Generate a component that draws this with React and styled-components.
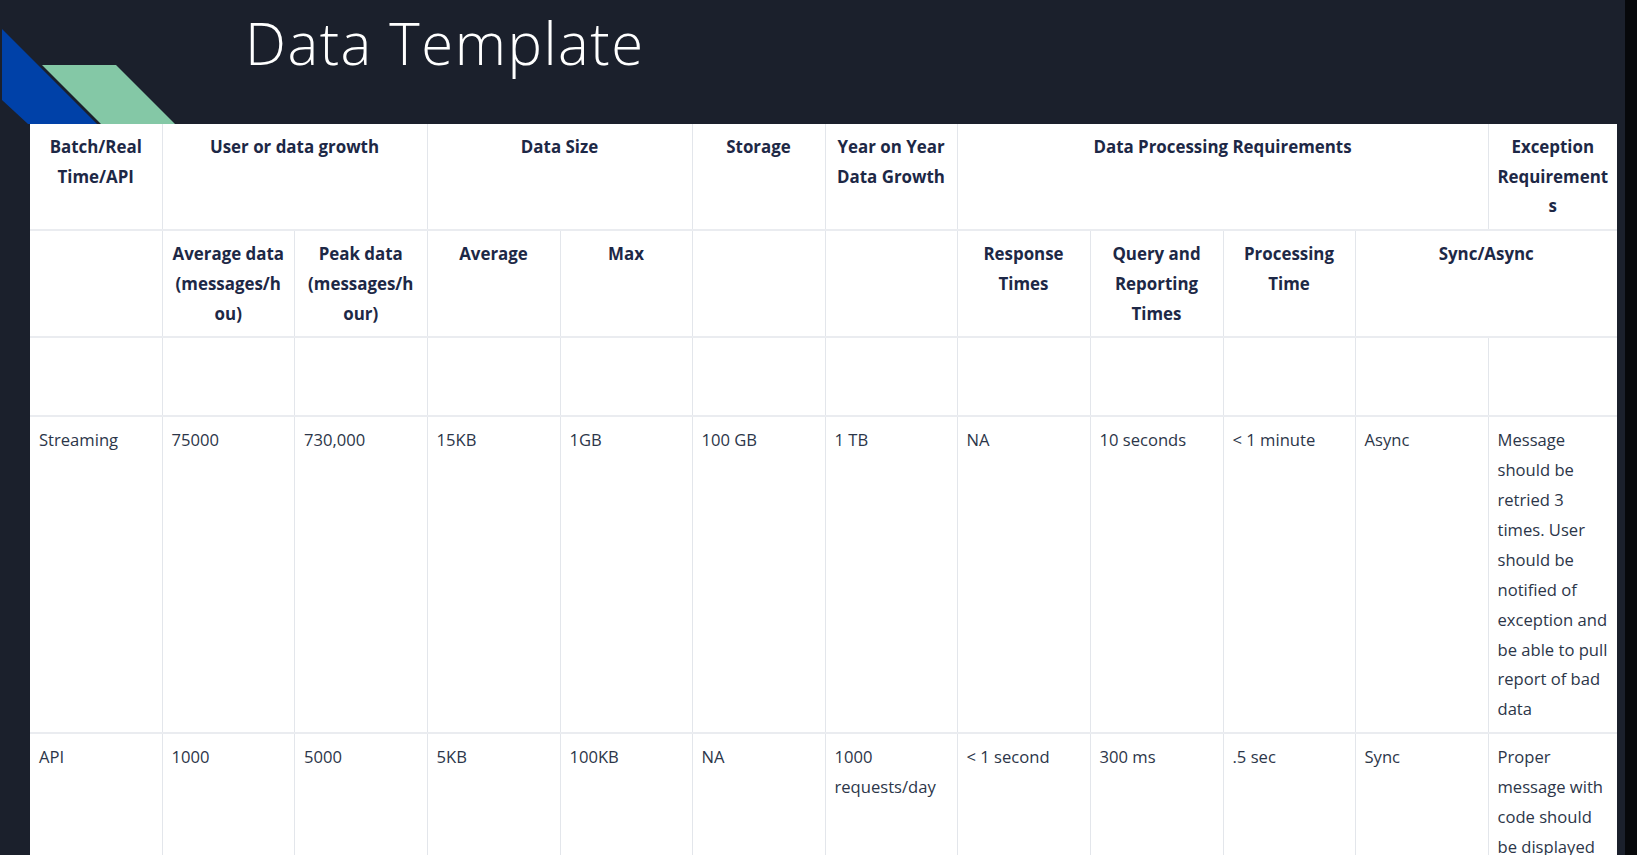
import React from "react";
import styled, { createGlobalStyle } from "styled-components";

const Global = createGlobalStyle`
  html, body {
    margin: 0;
    padding: 0;
    background: #07080b;
    overflow: hidden;
  }
  body {
    font-family: "Open Sans", "Noto Sans", "Liberation Sans", sans-serif;
  }
`;

const Slide = styled.div`
  width: 1625px;
  height: 855px;
  background: #1b202c;
  display: flex;
  flex-direction: column;
  overflow: hidden;
`;

const Header = styled.header`
  height: 124px;
  display: flex;
  align-items: flex-start;
  flex-shrink: 0;
`;

const Decor = styled.svg`
  width: 180px;
  height: 124px;
  flex-shrink: 0;
  display: block;
`;

const Title = styled.h1`
  margin: 0 0 0 65px;
  padding-top: 14px;
  font-family: "Open Sans", "Noto Sans", sans-serif;
  font-weight: 300;
  font-size: 58px;
  line-height: 58px;
  color: #ffffff;
  letter-spacing: 1.5px;
`;

const TableWrap = styled.div`
  padding-left: 30px;
  flex: 1;
`;

const Table = styled.table`
  width: 1587px;
  table-layout: fixed;
  border-collapse: collapse;
  background: #ffffff;
`;

const Col = styled.col`
  width: ${(p) => p.$w}px;
`;

const Row = styled.tr`
  height: ${(p) => (p.$h ? `${p.$h}px` : "auto")};
`;

const Th = styled.th`
  border-left: 1px solid #e3e6eb;
  border-top: 2px solid #eaecf0;
  padding: 8px 8px;
  vertical-align: top;
  text-align: center;
  font-weight: 700;
  font-size: 16.9px;
  line-height: 29.7px;
  color: #1d2846;
  overflow-wrap: anywhere;
  &:first-child {
    border-left: none;
  }
`;

const Td = styled.td`
  border-left: 1px solid #e3e6eb;
  border-top: 2px solid #eaecf0;
  padding: 8px 7px 8px 9px;
  vertical-align: top;
  text-align: left;
  font-weight: 400;
  font-size: 16.6px;
  line-height: 29.9px;
  color: #2c3649;
  overflow-wrap: anywhere;
  &:first-child {
    border-left: none;
  }
`;

const FirstRow = styled(Row)`
  & > th {
    border-top: none;
  }
`;

const colWidths = [132, 132.5, 132.5, 133, 132, 133, 132, 133, 133, 132, 133, 129];

const header2 = [
  { t: "" },
  { t: "Average data (messages/hou)" },
  { t: "Peak data (messages/hour)" },
  { t: "Average" },
  { t: "Max" },
  { t: "" },
  { t: "" },
  { t: "Response Times" },
  { t: "Query and Reporting Times" },
  { t: "Processing Time" },
  { t: "Sync/Async", span: 2 },
];

const rows = [
  [
    "Streaming",
    "75000",
    "730,000",
    "15KB",
    "1GB",
    "100 GB",
    "1 TB",
    "NA",
    "10 seconds",
    "< 1 minute",
    "Async",
    "Message should be retried 3 times. User should be notified of exception and be able to pull report of bad data",
  ],
  [
    "API",
    "1000",
    "5000",
    "5KB",
    "100KB",
    "NA",
    "1000 requests/day",
    "< 1 second",
    "300 ms",
    ".5 sec",
    "Sync",
    "Proper message with code should be displayed",
  ],
];

export default function App() {
  return (
    <>
      <Global />
      <Slide>
        <Header>
          <Decor viewBox="0 0 180 124">
            <polygon points="2,29 97,124 28,124 2,100" fill="#0041a8" />
            <polygon points="42,65 116,65 175,124 101,124" fill="#84c8a6" />
          </Decor>
          <Title>Data Template</Title>
        </Header>
        <TableWrap>
          <Table>
            <colgroup>
              {colWidths.map((w, i) => (
                <Col key={i} $w={w} />
              ))}
            </colgroup>
            <thead>
              <FirstRow>
                <Th>Batch/Real Time/API</Th>
                <Th colSpan={2}>User or data growth</Th>
                <Th colSpan={2}>Data Size</Th>
                <Th>Storage</Th>
                <Th>Year on Year Data Growth</Th>
                <Th colSpan={4}>Data Processing Requirements</Th>
                <Th>Exception Requirements</Th>
              </FirstRow>
              <Row>
                {header2.map((h, i) => (
                  <Th key={i} colSpan={h.span || 1}>
                    {h.t}
                  </Th>
                ))}
              </Row>
            </thead>
            <tbody>
              <Row $h={79}>
                {colWidths.map((_, i) => (
                  <Td key={i} />
                ))}
              </Row>
              {rows.map((r, ri) => (
                <Row key={ri}>
                  {r.map((c, ci) => (
                    <Td key={ci}>{c}</Td>
                  ))}
                </Row>
              ))}
            </tbody>
          </Table>
        </TableWrap>
      </Slide>
    </>
  );
}
